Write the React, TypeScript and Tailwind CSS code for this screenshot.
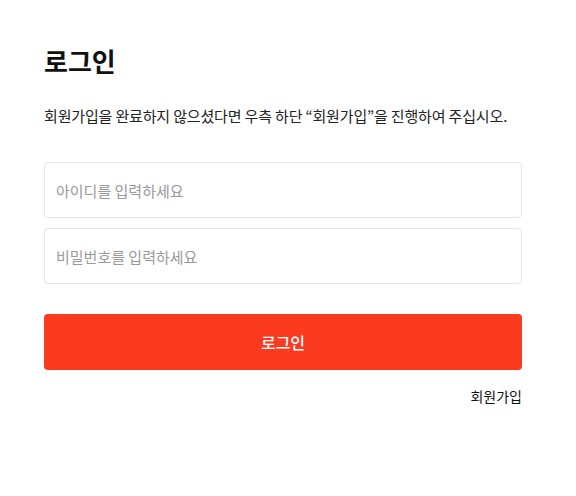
import React from "react";

export default function App() {
  return (
    <div
      className="w-[576px] h-[496px] bg-white px-[44px] pt-[40px]"
      style={{ fontFamily: '"Noto Sans CJK KR", "Noto Sans", sans-serif' }}
    >
      <div className="w-[478px]">
        <h1 className="text-[26px] font-bold leading-[42px] text-[#111]">로그인</h1>
        <p className="mt-[23px] text-[15px] tracking-[-0.16px] leading-[22px] text-[#222]">
          회원가입을 완료하지 않으셨다면 우측 하단 “회원가입”을 진행하여 주십시오.
        </p>
        <div className="mt-[35px] flex flex-col gap-[10px]">
          <input
            className="h-[56px] w-full rounded-[4px] border border-[#e5e5e5] px-[11px] text-[15px] text-[#222] placeholder:text-[#999] outline-none"
            placeholder="아이디를 입력하세요"
          />
          <input
            type="password"
            className="h-[56px] w-full rounded-[4px] border border-[#e5e5e5] px-[11px] text-[15px] text-[#222] placeholder:text-[#999] outline-none"
            placeholder="비밀번호를 입력하세요"
          />
        </div>
        <button className="mt-[30px] flex h-[56px] w-full items-center justify-center rounded-[4px] bg-[#fc3a20] text-[16px] font-medium text-white">
          로그인
        </button>
        <div className="mt-[15px] flex justify-end">
          <a className="text-[14px] leading-[22px] text-[#111]">회원가입</a>
        </div>
      </div>
    </div>
  );
}
